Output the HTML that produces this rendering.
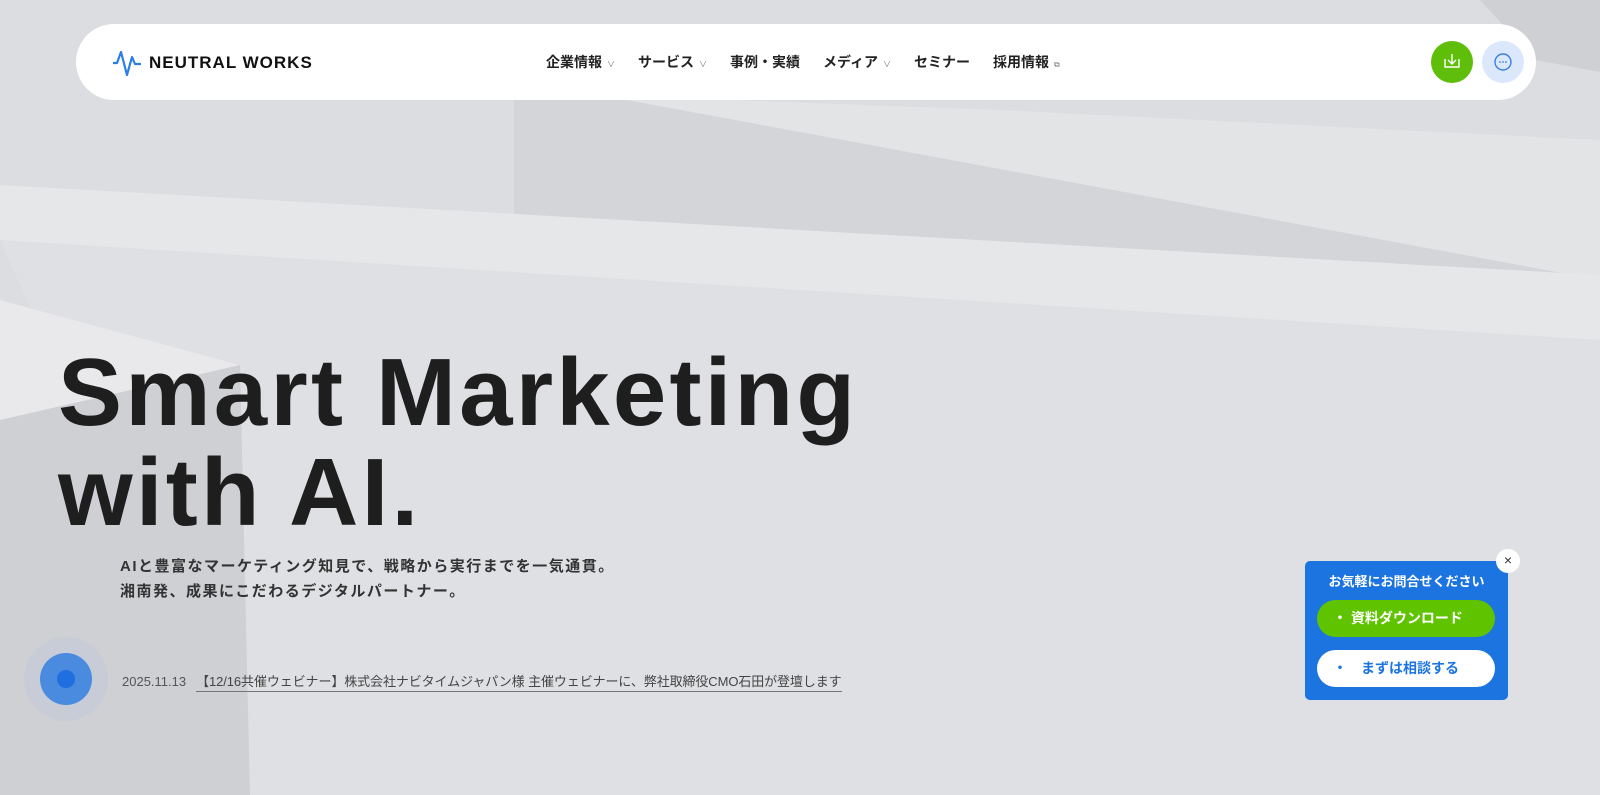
<!DOCTYPE html>
<html><head><meta charset="utf-8"><style>
*{margin:0;padding:0;box-sizing:border-box}
body{width:1600px;height:795px;overflow:hidden;background:#dcdde0;font-family:"Liberation Sans","Noto Sans CJK JP",sans-serif;position:relative}
.bg{position:absolute;left:0;top:0}
.nav{position:absolute;left:76px;top:24px;width:1460px;height:76px;background:#fff;border-radius:38px}
.logo{position:absolute;left:36px;top:25px;display:flex;align-items:center;gap:7px;font-weight:bold;font-size:17px;letter-spacing:1px;color:#111}
.menu{position:absolute;left:470px;top:28px;display:flex;gap:23px;font-size:14px;font-weight:bold;color:#222}
.menu span small{font-size:8px;color:#777;margin-left:5px;font-weight:normal}
.b1{position:absolute;left:1355px;top:17px;width:42px;height:42px;border-radius:50%;background:#5fbe0a}
.b2{position:absolute;left:1406px;top:17px;width:42px;height:42px;border-radius:50%;background:#dbe8fb}
h1{position:absolute;left:58px;top:343px;font-size:96px;line-height:100px;font-weight:bold;color:#1e1e1e;letter-spacing:3.2px}
.sub{position:absolute;left:120px;top:554px;font-size:15px;line-height:25px;font-weight:bold;color:#333;letter-spacing:1.5px}
.news{position:absolute;left:122px;top:671px;font-size:13px;color:#555}
.news b{font-weight:normal;margin-left:10px;border-bottom:1px solid #777;padding-bottom:2px;color:#444;letter-spacing:-.1px}
.dot{position:absolute;left:24px;top:637px;width:84px;height:84px;border-radius:50%;background:#c8ccd6}
.dot i{position:absolute;left:16px;top:16px;width:52px;height:52px;border-radius:50%;background:#4a8be0}
.dot i:after{content:"";position:absolute;left:17px;top:17px;width:18px;height:18px;border-radius:50%;background:#1f6fe0}
.cta{position:absolute;left:1305px;top:561px;width:203px;height:139px;background:#1b74e0;border-radius:5px;color:#fff}
.cta .t{text-align:center;font-size:13px;font-weight:bold;margin-top:10px}
.cta .g{position:absolute;left:12px;top:39px;width:178px;height:37px;border-radius:19px;background:#60c300;font-size:14px;font-weight:bold;padding:8px 0 0 16px}
.cta .w{position:absolute;left:12px;top:89px;width:178px;height:37px;border-radius:19px;background:#fff;color:#1b74e0;font-size:14px;font-weight:bold;padding:8px 0 0 16px}
.x{position:absolute;left:1496px;top:549px;width:24px;height:24px;border-radius:50%;background:#fff;color:#333;text-align:center;line-height:23px;font-size:14px}
</style></head><body>
<svg class="bg" width="1600" height="795">
<polygon points="0,0 1600,0 1600,795 0,795" fill="#dcdde0"/>
<polygon points="514,95 514,215 1600,280 1600,180 600,95" fill="#d4d5d9"/>
<polygon points="600,95 1600,280 1600,140 1000,110" fill="#e3e4e6"/>
<polygon points="0,185 1600,275 1600,340 0,240" fill="#e6e7e9"/>
<polygon points="0,240 1600,340 1600,795 250,795" fill="#dfe0e3"/>
<polygon points="0,300 240,365 250,795 0,795" fill="#cfd0d4"/>
<polygon points="0,300 240,365 0,420" fill="#e9e9eb"/>
<polygon points="1480,0 1600,0 1600,72 1535,60" fill="#cfd0d4"/>
</svg>
<div class="nav">
<div class="logo"><svg width="30" height="28" viewBox="0 0 30 28"><path d="M1 14 H5 L9 3 L15 26 L20 8 L23 15 H29" fill="none" stroke="#2b7de9" stroke-width="2.2" stroke-linejoin="round"/></svg>NEUTRAL WORKS</div>
<div class="menu"><span>企業情報<small>∨</small></span><span>サービス<small>∨</small></span><span>事例・実績</span><span>メディア<small>∨</small></span><span>セミナー</span><span>採用情報<small>⧉</small></span></div>
<div class="b1"><svg width="42" height="42"><path d="M14 18v8h14v-8M21 13v9M17 19l4 4 4-4" fill="none" stroke="#fff" stroke-width="1.4"/></svg></div>
<div class="b2"><svg width="42" height="42"><circle cx="21" cy="21" r="8" fill="none" stroke="#3a7fe0" stroke-width="1.4"/><circle cx="18" cy="21" r=".9" fill="#3a7fe0"/><circle cx="21" cy="21" r=".9" fill="#3a7fe0"/><circle cx="24" cy="21" r=".9" fill="#3a7fe0"/></svg></div>
</div>
<h1>Smart Marketing<br>with AI.</h1>
<div class="sub">AIと豊富なマーケティング知見で、戦略から実行までを一気通貫。<br>湘南発、成果にこだわるデジタルパートナー。</div>
<div class="dot"><i></i></div>
<div class="news">2025.11.13<b>【12/16共催ウェビナー】株式会社ナビタイムジャパン様 主催ウェビナーに、弊社取締役CMO石田が登壇します</b></div>
<div class="cta"><div class="t">お気軽にお問合せください</div><div class="g">・ 資料ダウンロード</div><div class="w">・　まずは相談する</div></div>
<div class="x">×</div>
</body></html>
